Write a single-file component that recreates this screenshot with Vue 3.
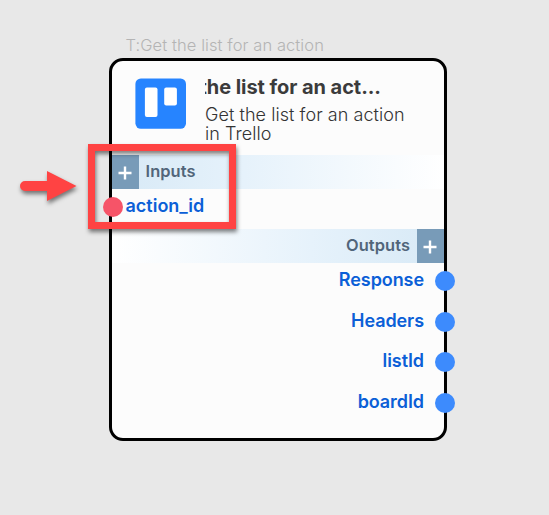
<script setup>
const outputs = ['Response', 'Headers', 'listId', 'boardId']
</script>

<template>
  <main class="canvas">
    <div class="caption">T:Get the list for an action</div>
    <section class="node">
      <header class="head">
        <svg class="logo" viewBox="0 0 51 51">
          <rect x=".4" y=".4" width="50.6" height="50.4" rx="5.5" fill="#2684ff" />
          <rect x="9.9" y="9.5" width="12.6" height="29.5" rx="2" fill="#fff" />
          <rect x="29.2" y="9.5" width="12.7" height="18" rx="2" fill="#fff" />
        </svg>
        <div class="titles">
          <h1 class="title"><span>the list for an act...</span></h1>
          <p class="desc">Get the list for an action in Trello</p>
        </div>
      </header>
      <div class="band inputs">
        <span class="plus"><svg viewBox="0 0 14 14"><path d="M7 .5v13M.5 7h13" stroke="#fff" stroke-width="2.4" /></svg></span>
        <span class="label">Inputs</span>
      </div>
      <div class="port in"><span class="name">action_id</span><i class="dot"></i></div>
      <div class="band outputs">
        <span class="label">Outputs</span>
        <span class="plus"><svg viewBox="0 0 14 14"><path d="M7 .5v13M.5 7h13" stroke="#fff" stroke-width="2.4" /></svg></span>
      </div>
      <div class="ports">
        <div v-for="o in outputs" :key="o" class="port out"><span class="name">{{ o }}</span><i class="dot"></i></div>
      </div>
    </section>
    <div class="highlight"></div>
    <svg class="arrow" viewBox="0 0 58 32">
      <path d="M5 11H27V1L56.5 16L27 31V21H5A5 5 0 0 1 5 11Z" fill="#ff4343" />
    </svg>
  </main>
</template>

<style>
body { margin: 0; background: #e8e8e8; }
</style>

<style scoped>
.canvas {
  position: relative;
  box-sizing: border-box;
  width: 549px;
  height: 515px;
  padding: 35px 0 0 109px;
  overflow: hidden;
  background: #e8e8e8;
  font-family: Inter, "Liberation Sans", sans-serif;
}
.caption {
  height: 23px;
  padding-left: 16.5px;
  font-size: 16.5px;
  font-weight: 300;
  line-height: 21px;
  letter-spacing: .08px;
  color: #b4b4b4;
  white-space: nowrap;
}
.node {
  box-sizing: border-box;
  width: 338px;
  height: 383px;
  border: 3px solid #000;
  border-radius: 14px;
  background: #fcfcfc;
}
.head {
  display: flex;
  box-sizing: border-box;
  height: 94px;
  padding: 17px 0 0 23px;
  gap: 19px;
}
.logo { flex: none; width: 51px; height: 51px; }
.titles { width: 210px; }
.title {
  display: flex;
  justify-content: flex-end;
  width: 176px;
  height: 24px;
  margin: -3px 0 0;
  overflow: hidden;
  font-size: 20px;
  font-weight: 700;
  line-height: 24px;
  letter-spacing: -.06px;
  color: #3b3b3b;
  white-space: nowrap;
}
.desc {
  margin: 6px 0 0;
  font-size: 18px;
  font-weight: 300;
  line-height: 19px;
  letter-spacing: .06px;
  color: #333;
}
.band { display: flex; align-items: center; height: 34px; }
.inputs { background: linear-gradient(90deg, #d7e9f6, #e6f2fb 40%, #fff); }
.outputs { justify-content: flex-end; background: linear-gradient(270deg, #d7e9f6, #e6f2fb 40%, #fff); }
.plus {
  display: flex;
  align-items: center;
  justify-content: center;
  width: 27px;
  height: 34px;
  background: #789bb8;
}
.plus svg { width: 14px; height: 14px; margin: 2px 1px 0 0; }
.label {
  padding: 0 7px 2px 6.5px;
  font-size: 16.4px;
  font-weight: 600;
  line-height: 20px;
  letter-spacing: .1px;
  color: #51657a;
}
.port {
  position: relative;
  display: flex;
  align-items: center;
  font-size: 18px;
  font-weight: 600;
  letter-spacing: -.08px;
  color: #0b5fd7;
}
.name { line-height: 22px; }
.dot { position: absolute; width: 20px; height: 20px; border-radius: 50%; }
.in { height: 40px; letter-spacing: 0; }
.in .name { padding: 0 0 6px 13.5px; }
.in .dot { left: -9px; top: 8px; background: #f65468; }
.ports { padding-top: 8px; }
.out { justify-content: flex-end; height: 20px; margin-bottom: 20.5px; }
.out .name { padding: 0 20px 2px 0; }
.out .dot { right: -11px; top: 0; background: #3d8bfd; }
.highlight {
  position: absolute;
  box-sizing: border-box;
  left: 88px;
  top: 144px;
  width: 148px;
  height: 85px;
  border: 7px solid #ff4343;
  filter: drop-shadow(1px 3px 2px rgba(0, 0, 0, .5));
}
.arrow {
  position: absolute;
  left: 20px;
  top: 170px;
  width: 58px;
  height: 32px;
  overflow: visible;
  filter: drop-shadow(1px 3px 2px rgba(0, 0, 0, .5));
}
</style>
